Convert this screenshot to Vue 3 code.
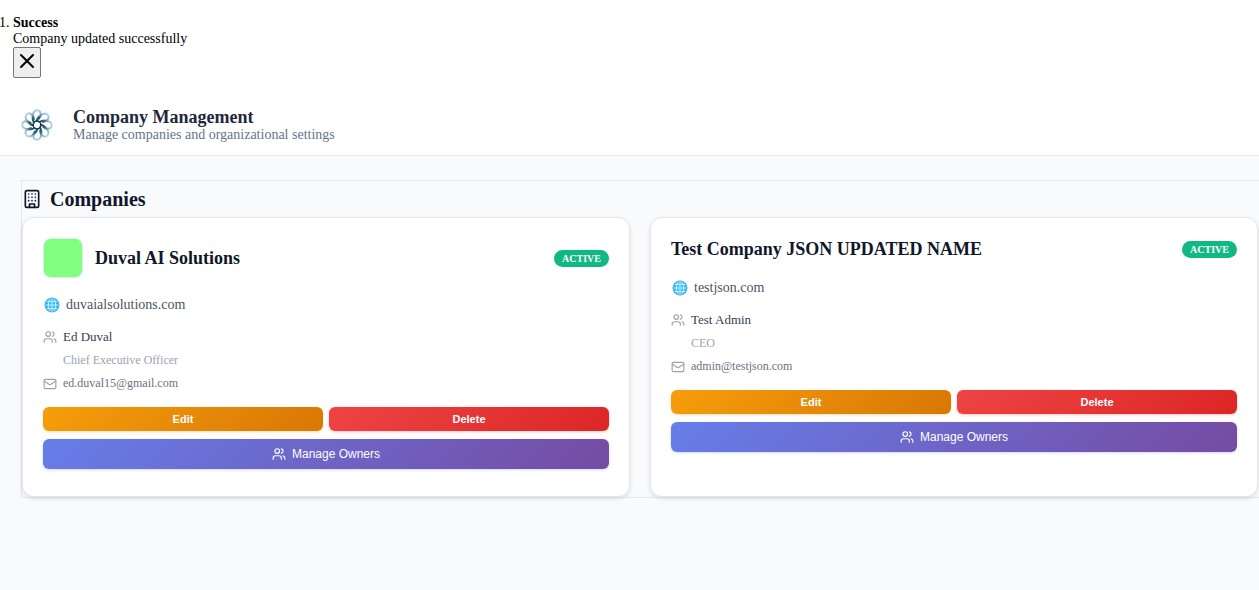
<script setup>
const companies = [
  {
    name: 'Duval AI Solutions',
    hasLogo: true,
    website: 'duvaialsolutions.com',
    owner: 'Ed Duval',
    title: 'Chief Executive Officer',
    email: 'ed.duval15@gmail.com'
  },
  {
    name: 'Test Company JSON UPDATED NAME',
    hasLogo: false,
    website: 'testjson.com',
    owner: 'Test Admin',
    title: 'CEO',
    email: 'admin@testjson.com'
  }
]
const petals = [0, 45, 90, 135, 180, 225, 270, 315]
</script>

<template>
  <div class="page">
    <ol class="toasts">
      <li>
        <div class="toast-title">Success</div>
        <div>Company updated successfully</div>
        <button class="toast-close" type="button" aria-label="Close">
          <svg width="24" height="24" viewBox="0 0 24 24" fill="none" stroke="currentColor" stroke-width="2" stroke-linecap="round" stroke-linejoin="round"><path d="M18 6 6 18M6 6l12 12" /></svg>
        </button>
      </li>
    </ol>

    <header class="header">
      <svg class="brand" viewBox="0 0 32 32" fill="none" aria-hidden="true">
        <defs>
          <radialGradient id="petal" gradientUnits="userSpaceOnUse" cx="16" cy="16" r="16">
            <stop offset="0.2" stop-color="#123f55" />
            <stop offset="0.5" stop-color="#2f6279" />
            <stop offset="0.75" stop-color="#8fb7c9" />
            <stop offset="1" stop-color="#b9e0f2" />
          </radialGradient>
        </defs>
        <path
          v-for="angle in petals"
          :key="angle"
          d="M13 13.6C10.4 9.4 11.4 1.2 16.2 1.2C20.6 1.2 20.6 6.8 18 9.6"
          :transform="`rotate(${angle} 16 16)`"
          stroke="url(#petal)"
          stroke-width="1.9"
          stroke-linecap="round"
        />
        <circle cx="16" cy="16" r="3.9" stroke="#123f55" stroke-width="1.5" />
      </svg>
      <div>
        <h1>Company Management</h1>
        <p>Manage companies and organizational settings</p>
      </div>
    </header>

    <main class="content">
      <section class="panel">
        <h2 class="panel-title">
          <svg width="20" height="20" viewBox="0 0 24 24" fill="none" stroke="currentColor" stroke-width="2" stroke-linecap="round" stroke-linejoin="round"><rect x="4" y="2" width="16" height="20" rx="2" /><path d="M9 22v-4h6v4M8 6h.01M16 6h.01M12 6h.01M12 10h.01M12 14h.01M16 10h.01M16 14h.01M8 10h.01M8 14h.01" /></svg>
          Companies
        </h2>
        <div class="grid">
          <article v-for="company in companies" :key="company.name" class="card">
            <div class="card-head">
              <div v-if="company.hasLogo" class="company-logo"></div>
              <h3>{{ company.name }}</h3>
              <span class="badge">ACTIVE</span>
            </div>
            <a class="website" href="#">
              <svg width="18" height="16" viewBox="0 0 18 16" fill="none" aria-hidden="true">
                <circle cx="9" cy="8" r="7.3" fill="#35bdf8" />
                <g stroke="#d8f3ff" stroke-width="0.9">
                  <path d="M9 1v14M2 8h14M3.4 4.4h11.2M3.4 11.6h11.2" />
                  <ellipse cx="9" cy="8" rx="3.6" ry="7" />
                </g>
                <circle cx="9" cy="8" r="6.9" stroke="#3fb0ea" stroke-width="1" />
              </svg>
              {{ company.website }}
            </a>
            <div class="contact">
              <div class="row owner">
                <svg width="14" height="14" viewBox="0 0 24 24" fill="none" stroke="#9ca3af" stroke-width="2" stroke-linecap="round" stroke-linejoin="round"><path d="M16 21v-2a4 4 0 0 0-4-4H6a4 4 0 0 0-4 4v2M22 21v-2a4 4 0 0 0-3-3.87M16 3.13a4 4 0 0 1 0 7.75" /><circle cx="9" cy="7" r="4" /></svg>
                {{ company.owner }}
              </div>
              <div class="row job">{{ company.title }}</div>
              <div class="row email">
                <svg width="14" height="14" viewBox="0 0 24 24" fill="none" stroke="#9ca3af" stroke-width="2" stroke-linecap="round" stroke-linejoin="round"><rect x="2" y="4" width="20" height="16" rx="2" /><path d="m22 7-8.97 5.7a1.94 1.94 0 0 1-2.06 0L2 7" /></svg>
                {{ company.email }}
              </div>
            </div>
            <div class="actions">
              <button class="edit" type="button">Edit</button>
              <button class="delete" type="button">Delete</button>
              <button class="manage" type="button">
                <svg width="14" height="14" viewBox="0 0 24 24" fill="none" stroke="currentColor" stroke-width="2" stroke-linecap="round" stroke-linejoin="round"><path d="M16 21v-2a4 4 0 0 0-4-4H6a4 4 0 0 0-4 4v2M22 21v-2a4 4 0 0 0-3-3.87M16 3.13a4 4 0 0 1 0 7.75" /><circle cx="9" cy="7" r="4" /></svg>
                Manage Owners
              </button>
            </div>
          </article>
        </div>
      </section>
    </main>
  </div>
</template>

<style>
html,
body {
  margin: 0;
  background: #f8fafc;
}
</style>

<style scoped>
.page {
  font-family: "Liberation Serif", "Times New Roman", serif;
  font-size: 14px;
  line-height: 16px;
  color: #000;
}
h1, h2, h3, p {
  margin: 0;
}
.toasts {
  margin: 0;
  padding: 15px 13px 16px;
  background: #fff;
}
.toast-title {
  font-weight: 700;
}
.toast-close {
  display: block;
  width: 28px;
  height: 31px;
  margin: 0;
  padding: 0 1px 3px;
  border: 1px solid #767676;
  border-radius: 2px;
  background: #efefef;
  color: #000;
}
.toast-close svg {
  display: block;
}
.header {
  display: flex;
  align-items: center;
  gap: 20px;
  padding: 13px 21px 12px;
  border-bottom: 1px solid #e2e8f0;
  background: #fff;
}
.brand {
  width: 32px;
  height: 32px;
}
.header h1 {
  font-size: 18px;
  line-height: 20px;
  color: #1e293b;
}
.header p {
  color: #64748b;
}
.content {
  padding: 24px 0 24px 21px;
}
.panel {
  padding-right: 1px;
  border: 1px solid #e2e8f0;
  border-right: 0;
}
.panel-title {
  display: flex;
  align-items: center;
  gap: 8px;
  height: 36px;
  font-size: 20px;
  color: #0f172a;
}
.grid {
  display: grid;
  grid-template-columns: 1fr 1fr;
  gap: 20px;
}
.card {
  padding: 20px 20px 27px;
  border: 1px solid #e2e8f0;
  border-radius: 12px;
  background: #fff;
  box-shadow: 0 2px 4px rgba(0, 0, 0, 0.1);
}
.card-head {
  display: flex;
  align-items: center;
  gap: 12px;
  margin-bottom: 16px;
}
.company-logo {
  box-sizing: border-box;
  width: 40px;
  height: 40px;
  border: 1px solid #e2e8f0;
  border-radius: 8px;
  background: #80ff80;
}
.card h3 {
  flex: 1;
  font-size: 18px;
  line-height: 23px;
  color: #0f172a;
}
.badge {
  padding: 0 8px;
  border-radius: 12px;
  background: #10b981;
  color: #fff;
  font-size: 10px;
  font-weight: 700;
  line-height: 17px;
}
.website {
  display: flex;
  align-items: center;
  gap: 5px;
  margin-bottom: 13px;
  line-height: 21px;
  color: #4b5563;
  text-decoration: none;
}
.contact {
  display: grid;
  gap: 6px;
  margin-bottom: 15px;
}
.row {
  display: flex;
  align-items: center;
  gap: 6px;
  line-height: 17px;
}
.owner {
  font-size: 13px;
  color: #374151;
}
.job {
  padding-left: 20px;
  font-size: 12px;
  line-height: 18px;
  color: #9ca3af;
}
.email {
  font-size: 12px;
  color: #6b7280;
}
.actions {
  display: grid;
  grid-template-columns: 1fr 1fr;
  gap: 8px 6px;
}
.actions button {
  display: flex;
  align-items: center;
  justify-content: center;
  gap: 6px;
  height: 24px;
  padding: 0;
  border: 0;
  border-radius: 6px;
  color: #fff;
  font-family: "Liberation Sans", Arial, sans-serif;
  font-size: 11px;
  font-weight: 600;
}
.actions .edit {
  background: linear-gradient(135deg, #f59e0b, #d97706);
  box-shadow: 0 1px 3px rgba(245, 158, 11, 0.3);
}
.actions .delete {
  background: linear-gradient(135deg, #ef4444, #dc2626);
  box-shadow: 0 1px 3px rgba(239, 68, 68, 0.3);
}
.actions .manage {
  grid-column: 1 / -1;
  height: 30px;
  background: linear-gradient(135deg, #667eea, #764ba2);
  box-shadow: 0 1px 3px rgba(102, 126, 234, 0.3);
  font-size: 12px;
  font-weight: 500;
}
</style>
